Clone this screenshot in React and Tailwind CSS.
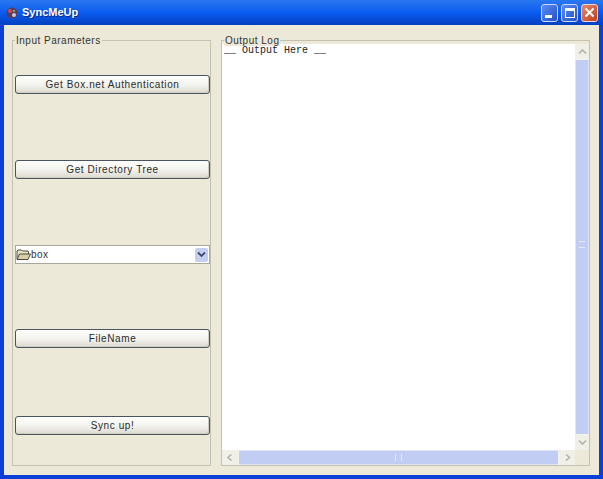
import React from "react";

function XpButton({ label, className }) {
  return (
    <button className={`h-[19px] w-full rounded-[3px] border border-[#4a5560] bg-gradient-to-b from-[#fdfdfb] via-[#f4f4ef] to-[#dcd9cf] text-center text-[10px] leading-[16px] tracking-[0.6px] text-[#2a2a2a] shadow-[inset_-1px_-1px_0_#cfccc0] ${className || ""}`}>
      {label}
    </button>
  );
}

function FolderIcon() {
  return (
    <svg width="15" height="13" viewBox="0 0 15 13" className="shrink-0">
      <path d="M1 11V3l1-1h3.5l1 1H12l.5 1v2" fill="#e8e2c4" stroke="#4c4a3c" strokeWidth="1" />
      <path d="M1 11.5 3.5 6H14.5L12 11.5Z" fill="#d8d0a8" stroke="#4c4a3c" strokeWidth="1" />
    </svg>
  );
}

function ScrollArrow({ d, className }) {
  return (
    <div className={`flex shrink-0 items-center justify-center bg-[#f1f0e8] ${className}`}>
      <svg width="9" height="7" viewBox="0 0 9 7">
        <path d={d} fill="none" stroke="#b4b4a8" strokeWidth="1.6" />
      </svg>
    </div>
  );
}

export default function App() {
  return (
    <div className="flex h-[479px] w-[603px] flex-col overflow-hidden bg-[#0a3fd8] font-['Liberation_Sans',sans-serif]">
      {/* title bar */}
      <div className="flex h-[25px] shrink-0 items-center bg-gradient-to-b from-[#2a78f0] via-[#0a5cf0] to-[#0440c0] pl-[5px] pr-[5px]">
        <svg width="14" height="14" viewBox="0 0 14 14" className="shrink-0">
          <circle cx="7" cy="7" r="5.5" fill="#5a3a5a" />
          <circle cx="5" cy="5" r="2" fill="#d84848" />
          <circle cx="9" cy="9" r="2" fill="#c8c8d8" />
          <circle cx="9" cy="5" r="1.3" fill="#70a070" />
        </svg>
        <span className="ml-[3px] text-[11px] font-bold text-white [text-shadow:1px_1px_0_#0a2a90]">SyncMeUp</span>
        <div className="ml-auto flex gap-[3px]">
          <div className="relative h-[18px] w-[17px] rounded-[3px] border border-[#c8d8f8] bg-gradient-to-br from-[#5c8cf0] to-[#2450c8]">
            <div className="absolute bottom-[3px] left-[3px] h-[3px] w-[7px] bg-white" />
          </div>
          <div className="flex h-[18px] w-[17px] items-center justify-center rounded-[3px] border border-[#c8d8f8] bg-gradient-to-br from-[#5c8cf0] to-[#2450c8]">
            <div className="h-[10px] w-[10px] border border-t-[3px] border-white" />
          </div>
          <div className="flex h-[18px] w-[17px] items-center justify-center rounded-[3px] border border-[#f0d8d0] bg-gradient-to-br from-[#e88868] to-[#c03c18]">
            <svg width="11" height="11" viewBox="0 0 11 11">
              <path d="M1.5 1.5 9.5 9.5M9.5 1.5 1.5 9.5" stroke="#fff" strokeWidth="2" />
            </svg>
          </div>
        </div>
      </div>

      {/* client area */}
      <div className="mx-[4px] mb-[4px] flex min-h-0 flex-1 gap-[10px] bg-[#ece9d8] pb-[9px] pl-[8px] pr-[9px] pt-[15px]">
        {/* left group */}
        <div className="relative flex w-[199px] shrink-0 flex-col border border-[#c4c1b0] pl-[2px] pt-[34px]">
          <span className="absolute left-[2px] top-[-5px] bg-[#ece9d8] px-[1px] text-[10px] leading-[10px] tracking-[0.5px] text-[#333]">Input Parameters</span>
          <XpButton label="Get Box.net Authentication" />
          <XpButton label="Get Directory Tree" className="mt-[66px]" />
          <div className="mt-[66px] flex h-[19px] items-center border border-[#a8a89c] bg-white pr-[1px]">
            <FolderIcon />
            <span className="text-[10px] tracking-[0.5px] text-[#333]">box</span>
            <div className="ml-auto flex h-[14px] w-[13px] items-center justify-center rounded-[2px] bg-[#c4cff0]">
              <svg width="9" height="7" viewBox="0 0 9 7">
                <path d="M1 1.5 4.5 5 8 1.5" fill="none" stroke="#3c4a78" strokeWidth="1.8" />
              </svg>
            </div>
          </div>
          <XpButton label="FileName" className="mt-[65px]" />
          <XpButton label="Sync up!" className="mt-[68px]" />
        </div>

        {/* right group */}
        <div className="relative flex min-w-0 flex-1 flex-col border border-[#c4c1b0] pt-[3px]">
          <span className="absolute left-[2px] top-[-5px] bg-[#ece9d8] px-[1px] text-[10px] leading-[10px] tracking-[0.5px] text-[#333]">Output Log</span>
          <div className="flex min-h-0 flex-1">
            <div className="min-w-0 flex-1 bg-white pl-[2px] pt-[1px] font-['Liberation_Mono',monospace] text-[10px] leading-[12px] text-[#222]">__ Output Here __</div>
            {/* vertical scrollbar */}
            <div className="flex w-[14px] shrink-0 flex-col bg-[#f4f3ec]">
              <ScrollArrow d="M1 5.5 4.5 2 8 5.5" className="h-[15px] w-[14px]" />
              <div className="relative my-[1px] flex-1 border-x border-[#dfe4f6] bg-[#c2cdf4]">
                <div className="absolute left-[3px] right-[3px] top-[181px] h-[7px] border-y border-[#e4e9fa]" />
              </div>
              <ScrollArrow d="M1 1.5 4.5 5 8 1.5" className="h-[15px] w-[14px]" />
            </div>
          </div>
          {/* horizontal scrollbar */}
          <div className="flex h-[15px] shrink-0 bg-[#f4f3ec]">
            <ScrollArrow d="M5.5 0.5 2 3.5 5.5 6.5" className="h-[15px] w-[16px]" />
            <div className="relative mx-[1px] flex-1 border-y border-[#dfe4f6] bg-[#c2cdf4]">
              <div className="absolute left-[156px] top-[3px] h-[7px] w-[7px] border-x border-[#e4e9fa]" />
            </div>
            <ScrollArrow d="M3 0.5 6.5 3.5 3 6.5" className="h-[15px] w-[16px]" />
            <div className="w-[14px] shrink-0 bg-[#ece9d8]" />
          </div>
        </div>
      </div>
    </div>
  );
}
